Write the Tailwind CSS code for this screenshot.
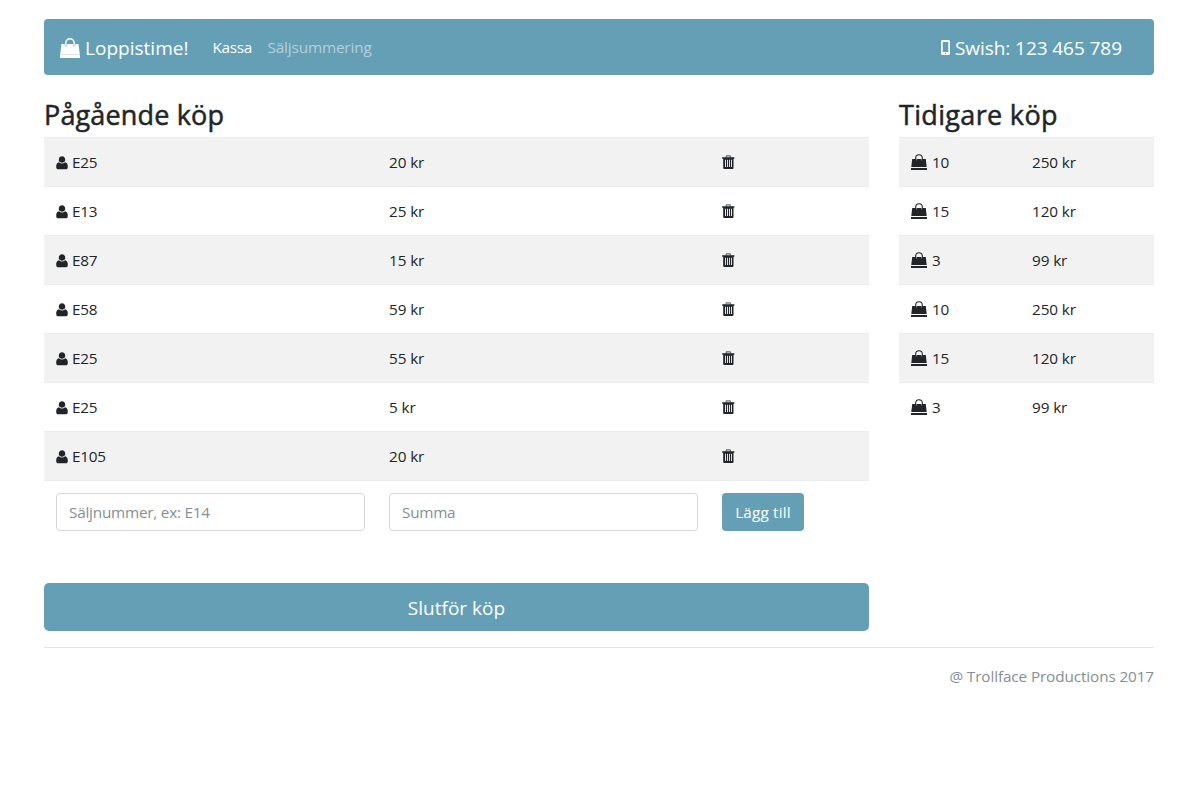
<!DOCTYPE html>
<html lang="sv">
<head>
<meta charset="utf-8">
<title>Loppistime!</title>
<script src="https://cdn.jsdelivr.net/npm/@tailwindcss/browser@4"></script>
</head>
<body class="bg-white font-['Open_Sans','Noto_Sans',sans-serif] text-[15.3px] leading-6 tracking-[-0.28px] text-[#212529]">
<svg class="hidden">
  <symbol id="user" viewBox="0 0 12 14"><path d="M6 .2a3.300 3.300 0 0 1 2 5.900q-.9.700-2 .7t-2-.7A3.300 3.300 0 0 1 6 .2zM3 6.300q1.200 1.200 3 1.200t3-1.200c2.100.1 2.800 2 2.800 4.700 0 1.500-.8 2.300-2 2.300H2.200C1 13.300.2 12.500.2 11 .2 8.300.9 6.400 3 6.300z"/></symbol>
  <symbol id="trash" viewBox="0 0 13 14"><path fill-rule="evenodd" d="M.2 2.200h12.200v1.600h-.900v9.200q0 1-1 1H2.200q-1 0-1-1V3.800h-1zM3 4.800v7.200h.9V4.800zm2 0v7.200h.9V4.800zm2 0v7.200h.9V4.800zm2 0v7.200h.9V4.800z"/><path d="M3.900 2.500L4.500.8h3.600l.6 1.700" fill="none" stroke="currentColor" stroke-width="1.200" opacity=".65"/></symbol>
  <symbol id="bag" viewBox="0 0 16 16"><path d="M1.200 5h13.600l.9 8H.3zM0 14h16v2H0z"/><path d="M4.700 6.500V4a3.300 3.300 0 0 1 6.600 0v2.500" fill="none" stroke="currentColor" stroke-width="1.100"/><path d="M5.500 5v1.500M10.500 5v1.500" stroke="#fff" stroke-width=".6" opacity=".7"/></symbol>
  <symbol id="bag-lg" viewBox="0 0 20 20"><path d="M1.500 6h17l1.300 10.200H.2zM.1 17h19.800l.1 3H0z"/><path d="M.2 16h19.600v1.400H.2z" opacity=".65"/><path d="M5.800 8V5a4.200 4.200 0 0 1 8.400 0v3" fill="none" stroke="currentColor" stroke-width="1.400"/><path d="M5 6v2.500M6.700 6v2.500M13.300 6v2.500M15 6v2.500" stroke="#659fb6" stroke-width=".5"/></symbol>
  <symbol id="phone" viewBox="0 0 9 15"><path fill-rule="evenodd" d="M1.500 0h6A1.500 1.500 0 0 1 9 1.500v12A1.500 1.500 0 0 1 7.500 15h-6A1.500 1.500 0 0 1 0 13.500v-12A1.500 1.500 0 0 1 1.500 0zM1.700 2v10h5.600V2zM4.500 12.700a.7.7 0 1 0 0 1.400.7.7 0 0 0 0-1.400z"/></symbol>
</svg>
<div class="ml-11 w-[1110px] pt-[19px]">
  <nav class="flex h-14 items-center rounded bg-[#659fb6] px-4 text-white">
    <svg class="mt-0.5 mr-[5px] size-5 fill-current"><use href="#bag-lg"/></svg>
    <span class="w-[127.500px] whitespace-nowrap pt-px text-[19px] tracking-[0.02px]">Loppistime!</span>
    <span class="w-[55px] whitespace-nowrap">Kassa</span>
    <span class="whitespace-nowrap tracking-[-0.150px] text-white/50">Säljsummering</span>
    <svg class="mt-px mr-[5px] ml-auto h-[15px] w-[9px] fill-current"><use href="#phone"/></svg>
    <span class="w-[183px] whitespace-nowrap pt-px text-[19px] tracking-[-0.07px]">Swish: 123 465 789</span>
  </nav>
  <main class="flex gap-[30px] pt-6">
    <section class="w-[825px]">
      <h1 class="h-[38px] whitespace-nowrap text-[27px] leading-[32px] tracking-[0.150px] [-webkit-text-stroke:0.5px_#212529]">Pågående köp</h1>
      <div id="current"></div>
      <div class="grid h-[63px] grid-cols-[333px_333px_159px] border-t border-[#e9ecef] pt-3">
        <div class="px-3"><input class="h-[38px] w-full rounded border border-[#d5d6d8] bg-white px-3 tracking-[-0.220px] placeholder:text-[#868e96]" placeholder="Säljnummer, ex: E14"></div>
        <div class="px-3"><input class="h-[38px] w-full rounded border border-[#d5d6d8] bg-white px-3 tracking-[-0.250px] placeholder:text-[#868e96]" placeholder="Summa"></div>
        <div class="px-3"><button class="h-[38px] w-[82px] whitespace-nowrap rounded bg-[#659fb6] tracking-[0.180px] text-white">Lägg till</button></div>
      </div>
      <button class="mt-10 h-12 w-full rounded-[5px] bg-[#659fb6] pt-0.5 text-[19px] tracking-[0.020px] text-white">Slutför köp</button>
    </section>
    <section class="w-[255px]">
      <h2 class="h-[38px] whitespace-nowrap text-[27px] leading-[32px] tracking-[0.330px] [-webkit-text-stroke:0.5px_#212529]">Tidigare köp</h2>
      <div id="earlier"></div>
    </section>
  </main>
  <footer class="mt-4 border-t border-[#e5e5e5] pt-4 text-right tracking-[-0.110px] text-[#868e96]">@ Trollface Productions 2017</footer>
</div>
<script>
const row = 'grid h-[49px] items-center border-t border-[#e9ecef] odd:bg-[#f2f2f2] ';
document.getElementById('current').innerHTML = [['E25',20],['E13',25],['E87',15],['E58',59],['E25',55],['E25',5],['E105',20]].map(([s, k]) =>
  `<div class="${row} grid-cols-[333px_333px_159px]">
    <div class="flex items-center px-3"><svg class="mt-px mr-1 h-[14px] w-[12px] fill-current"><use href="#user"/></svg><span>${s}</span></div>
    <div class="px-3 tracking-[-0.1px]">${k} kr</div>
    <div class="px-3"><svg class="h-[14px] w-[13px] fill-current"><use href="#trash"/></svg></div>
  </div>`).join('');
document.getElementById('earlier').innerHTML = [[10,250],[15,120],[3,99],[10,250],[15,120],[3,99]].map(([n, k]) =>
  `<div class="${row} grid-cols-[121px_134px]">
    <div class="flex items-center px-3"><svg class="mr-[5px] size-4 fill-current"><use href="#bag"/></svg><span>${n}</span></div>
    <div class="px-3 tracking-[-0.1px]">${k} kr</div>
  </div>`).join('');
</script>
</body>
</html>
